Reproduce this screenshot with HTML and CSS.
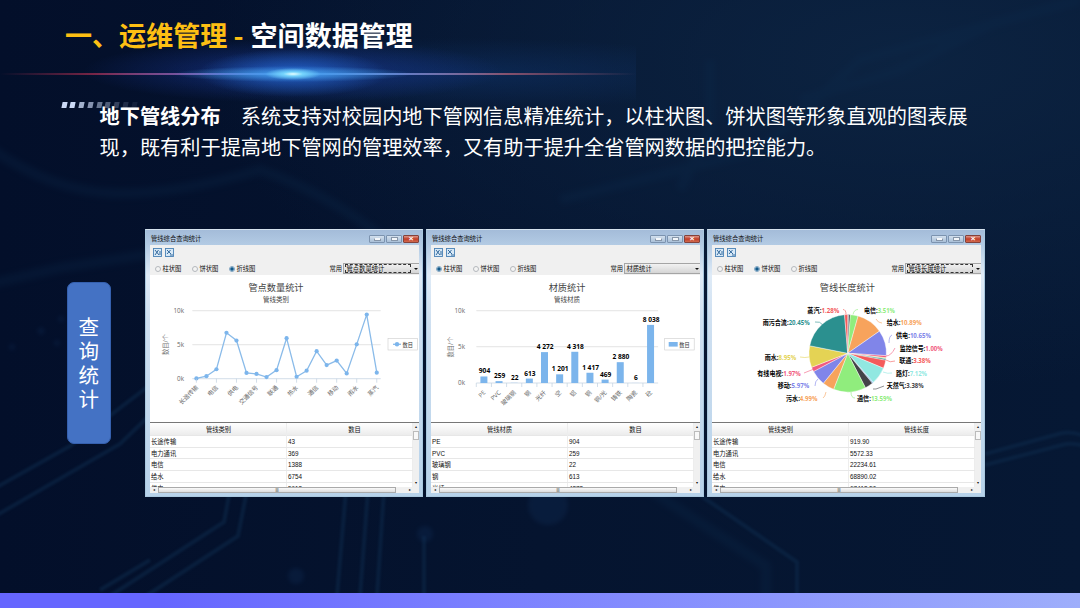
FILE: index.html
```html
<!DOCTYPE html>
<html lang="zh-CN">
<head>
    <meta charset="UTF-8">
    <meta name="viewport" content="width=device-width, initial-scale=1.0">
    <title>运维管理 - 空间数据管理</title>
    <link rel="stylesheet" href="styles.css">
</head>
<body>

<div class="slide">
    <!-- Circuit board background -->
    <svg class="circuit" viewBox="0 0 1080 608">
        <g class="wide">
            <path d="M-10 148 Q50 190 110 193 T260 170 Q320 190 380 235"/>
            <path d="M-10 284 L60 268 L150 254"/>
            <path d="M650 490 L766 566 V600"/>
            <path d="M560 200 L760 150 L860 60 L1080 0"/>
            <path d="M710 60 V130 L680 190"/>
            <path d="M800 100 L900 70 L1000 20"/>
        </g>
        <g class="thin">
            <path d="M-10 491 L70 446 L150 385"/>
            <path d="M-10 519 L120 444 L150 415"/>
            <path d="M230 490 L224 522 L110 596"/>
            <path d="M247 490 L238 536 L146 596"/>
            <path d="M346 490 L337 596"/>
            <path d="M368 490 L360 596"/>
            <path d="M384 490 L377 596"/>
            <path d="M424 536 V596"/>
            <path d="M700 495 L797 562 V596"/>
            <path d="M985 454 L1062 433 Q1072 431 1084 436"/>
            <path d="M985 465 L1062 445 Q1072 442 1084 446"/>
            <path d="M100 590 L150 560"/>
        </g>
        <g class="node">
            <circle cx="12" cy="347" r="3"/>
            <circle cx="41" cy="331" r="3.5"/>
            <circle cx="61" cy="319" r="3"/>
            <circle cx="57" cy="343" r="3"/>
            <circle cx="425" cy="534" r="8"/>
            <circle cx="296" cy="576" r="8"/>
            <circle cx="548" cy="505" r="20"/>
        </g>
    </svg>

    <header>
        <h1><span>一、运维管理 -</span> 空间数据管理</h1>
        <div class="flare"></div>
    </header>

    <section class="intro">
        <div class="stripes">
            <i></i><i></i><i></i><i></i><i></i><i></i><i></i><i></i><i></i>
        </div>
        <p><b>地下管线分布</b>　系统支持对校园内地下管网信息精准统计，以柱状图、饼状图等形象直观的图表展<br>现，既有利于提高地下管网的管理效率，又有助于提升全省管网数据的把控能力。</p>
    </section>

    <main>
        <div class="side-label">查询统计</div>
        <div class="windows" id="windows"></div>
    </main>

    <footer></footer>
</div>

<script>
    const COLORS = ["#7cb5ec", "#434348", "#90ed7d", "#f7a35c", "#8085e9", "#f15c80", "#e4d354", "#2b908f", "#f45b5b", "#91e8e1"];

    const windowsData = [
        {
            type: 2, select: "管点数量统计", focus: true, chart: lineChart,
            head: ["管线类别", "数目"],
            rows: [["长途传输", "43"], ["电力通讯", "369"], ["电信", "1388"], ["给水", "6754"], ["供电", "5613"]]
        },
        {
            type: 0, select: "材质统计", focus: false, chart: barChart,
            head: ["管线材质", "数目"],
            rows: [["PE", "904"], ["PVC", "259"], ["玻璃钢", "22"], ["钢", "613"], ["光纤", "4272"]]
        },
        {
            type: 1, select: "管线长度统计", focus: true, chart: pieChart,
            head: ["管线类别", "管线长度"],
            rows: [["长途传输", "919.90"], ["电力通讯", "5572.33"], ["电信", "22234.61"], ["给水", "68890.02"], ["供电", "67413.50"]]
        }
    ];

    function text(x, y, cls, str, extra) {
        return `<text x="${x}" y="${y}" class="${cls}" ${extra || ""}>${str}</text>`;
    }

    function grid(x1, x2, ys) {
        let out = "";
        ys.forEach((y, i) => {
            out += `<path class="${i === 2 ? "axis" : "grid"}" d="M${x1} ${y}H${x2}"/>`;
            out += text(34, y + 2, "tick", ["10k", "5k", "0k"][i]);
        });
        return out;
    }

    function legend(x, mark) {
        return `<rect class="legend" x="${x}" y="63.5" width="29.5" height="11.5"/>` + mark + text(x + 14.5, 71.5, "legend-text", "数目");
    }

    function lineChart() {
        const values = [40, 369, 1388, 6754, 5613, 850, 700, 240, 1260, 5960, 290, 1180, 4050, 2000, 2660, 780, 5050, 9430, 880];
        const names = ["长途传输", "电信", "供电", "交通信号", "联通", "热水", "通信", "移动", "雨水", "蒸汽"];
        const px = i => 46.4 + i * 10.02;
        const py = v => 103.7 - v * 0.0068;
        let out = text(126, 16, "title", "管点数量统计") + text(126, 27.4, "subtitle", "管线类别");
        out += grid(42.3, 230.7, [35.7, 69.7, 103.7]);
        out += text(0, 0, "y-title", "数目/个", 'transform="translate(18 69.5) rotate(-90)"');
        out += `<polyline class="line" points="${values.map((v, i) => px(i).toFixed(1) + "," + py(v).toFixed(1)).join(" ")}"/>`;
        values.forEach((v, i) => out += `<circle class="dot" cx="${px(i)}" cy="${py(v)}" r="2.1"/>`);
        names.forEach((n, i) => {
            out += `<path class="axis" d="M${px(i * 2)} 103.7v4"/>`;
            out += text(0, 0, "x-label", n, `transform="translate(${px(i * 2) + 2} 113) rotate(-45)"`);
        });
        return out + legend(238, '<path class="line" d="M243 69.3h8"/><circle class="dot" cx="247" cy="69.3" r="2.2"/>');
    }

    function barChart() {
        const data = [["PE", 904], ["PVC", 259], ["玻璃钢", 22], ["钢", 613], ["光纤", 4272], ["空", 1201], ["铝", 4318], ["铜", 1417], ["铜/光", 469], ["铸铁", 2880], ["陶瓷", 6], ["砼", 8038]];
        let out = text(136, 16, "title", "材质统计") + text(136, 27.4, "subtitle", "管线材质");
        out += grid(45.3, 227.1, [35.7, 71.7, 108]);
        out += text(0, 0, "y-title", "数目/个", 'transform="translate(22 72) rotate(-90)"');
        data.forEach(([name, v], i) => {
            const cx = 52.9 + i * 15.15;
            const h = v * 0.00723;
            out += `<path class="axis" d="M${cx - 7.6} 108v4"/>`;
            out += `<rect class="bar" x="${cx - 3.5}" y="${108 - h}" width="7" height="${h}"/>`;
            out += text(cx + 0.6, 105 - h, "bar-label", String(v).replace(/(\d)(\d{3})$/, "$1 $2"));
            out += text(0, 0, "x-label", name, `transform="translate(${cx + 2} 118) rotate(-45)"`);
        });
        return out + legend(233.7, '<rect class="bar" x="237.7" y="67" width="9" height="4.6"/>');
    }

    function pieChart() {
        const slices = [[0.35, 7], [0.75, 1], [3.2, 2], [10.9, 3], [10.6, 4], [0.9, 5], [0.4, 6], [0.6, 7], [3.38, 8], [7.2, 9], [0.5, 0], [3.38, 1], [13.4, 2], [4.9, 3], [6.3, 4], [1.9, 5], [8.95, 6], [20.45, 7], [1.28, 8]];
        // name, percent, colour, x, y, width
        const labels = [
            ["蒸汽", "1.28%", 8, 95.3, 35.3, 32], ["电信", "3.51%", 2, 152, 35.3, 31],
            ["给水", "10.89%", 3, 174.7, 48, 35], ["供电", "10.65%", 4, 184, 60.7, 35],
            ["监控信号", "1.00%", 5, 187.7, 73.3, 43], ["联通", "3.38%", 8, 187.3, 85.7, 31.5],
            ["路灯", "7.12%", 9, 184, 98.3, 31], ["天然气", "3.38%", 1, 174.7, 111, 37],
            ["通信", "13.59%", 2, 145, 123.5, 35], ["污水", "4.99%", 3, 74, 123.5, 31.5],
            ["移动", "5.97%", 4, 65.7, 111, 31.5], ["有线电视", "1.97%", 5, 45.3, 98.3, 43.5],
            ["雨水", "8.95%", 6, 52.7, 83, 31.5], ["雨污合流", "20.45%", 7, 50.7, 48, 47]
        ];
        const links = [
            ["M131 34.5q3 0 3 5", 8], ["M146 34.5q-4 0-5 5", 2], ["M170 48q-4 0-6-4", 3], ["M180 60q-3 1-3 8", 4],
            ["M183 73q-4 8-9 8", 5], ["M183 86q-5 2-9-1", 8], ["M180 98q-4 1-9-1", 9], ["M172 111l-8 3h-3", 1],
            ["M143 123q-4 0-4-6", 2], ["M111 123q2-1 3-6", 3], ["M103 111q0-5 3-7", 4], ["M92 98l10-4", 5],
            ["M88 82q5 1 9 0", 6], ["M103 47q5-1 8 3", 7]
        ];
        const total = slices.reduce((s, d) => s + d[0], 0);
        const cx = 135.7, cy = 78.3, r = 38.7;
        let a = 0;
        let out = text(135.3, 16, "title", "管线长度统计");
        slices.forEach(([v, c]) => {
            const b = a + v / total * Math.PI * 2;
            out += `<path class="slice" fill="${COLORS[c]}" d="M${cx} ${cy}L${cx + r * Math.sin(a)} ${cy - r * Math.cos(a)}A${r} ${r} 0 0 1 ${cx + r * Math.sin(b)} ${cy - r * Math.cos(b)}Z"/>`;
            a = b;
        });
        links.forEach(([d, c]) => out += `<path class="link" stroke="${COLORS[c]}" d="${d}"/>`);
        labels.forEach(([n, p, c, x, y, w]) => {
            out += text(x, y + 2.3, "pie-label", `${n}:<tspan fill="${COLORS[c]}">${p}</tspan>`, `textLength="${w}" lengthAdjust="spacingAndGlyphs"`);
        });
        return out;
    }

    document.getElementById("windows").innerHTML = windowsData.map(w => `
        <div class="window">
            <div class="title-bar">
                <span>管线综合查询统计</span>
                <div class="buttons"><i class="min"></i><i class="max"></i><i class="close">×</i></div>
            </div>
            <div class="client">
                <div class="toolbar">
                    <svg viewBox="0 0 9 9"><rect x=".5" y=".5" width="8" height="8"/><path d="M2 2l4 5M5.5 2L2 7M6 4h2M6 6h2"/></svg>
                    <svg viewBox="0 0 9 9"><rect x=".5" y=".5" width="8" height="8"/><path d="M2 2l4 4M5.5 2L2 6M5 7h3"/></svg>
                </div>
                <div class="options">
                    ${["柱状图", "饼状图", "折线图"].map((t, i) => `<label class="${i === w.type ? "checked" : ""}">${t}</label>`).join("")}
                    <span class="common">常用</span>
                    <div class="select ${w.focus ? "focus" : ""}"><span>${w.select}</span></div>
                </div>
                <svg class="chart" viewBox="0 0 271 147">${w.chart()}</svg>
                <div class="table">
                    <div class="cells">
                        <div class="row head"><span>${w.head[0]}</span><span>${w.head[1]}</span></div>
                        ${w.rows.map(r => `<div class="row"><span>${r[0]}</span><span>${r[1]}</span></div>`).join("")}
                    </div>
                    <div class="v-scroll"><b>▴</b><i></i><b>▾</b></div>
                </div>
                <div class="h-scroll"><b>◂</b><i>|||</i><b>▸</b></div>
            </div>
        </div>`).join("");
</script>

</body>
</html>
```
FILE: styles.css
```css
*, *::before, *::after {
    box-sizing: border-box;
}
body {
    margin: 0;
    font-family: "Liberation Sans", "Noto Sans CJK SC", sans-serif;
}
.slide {
    position: relative;
    display: flex;
    flex-direction: column;
    width: 1080px;
    height: 608px;
    overflow: hidden;
    color: #fff;
    background: radial-gradient(ellipse 700px 330px at 900px 60px, #0c2341, transparent), linear-gradient(90deg, #030f2a, #05142f 50%, #061834);
}
.circuit {
    position: absolute;
    inset: 0;
    fill: none;
}
.circuit .wide {
    stroke: #0d2b4c;
    stroke-width: 10;
    opacity: 0.28;
    filter: blur(3px);
}
.circuit .thin {
    stroke: #0d2a4b;
    stroke-width: 4;
    opacity: 0.55;
    filter: blur(1px);
}
.circuit .node {
    fill: #12305a;
    opacity: 0.3;
    filter: blur(2px);
}

header {
    position: relative;
    height: 101px;
}
h1 {
    margin: 0;
    padding: 15px 0 0 65px;
    font: bold 27.05px/40px "Noto Sans CJK SC", sans-serif;
    white-space: nowrap;
    position: relative;
    z-index: 1;
}
h1 span {
    color: #fdbf13;
    margin-right: 1px;
}
.flare {
    position: absolute;
    left: 0;
    top: 34px;
    width: 636px;
    height: 80px;
    background:
        radial-gradient(ellipse 28px 6px at 293px 40px, #e8ffff 0%, rgba(125, 222, 255, 0.85) 35%, rgba(80, 180, 255, 0) 100%),
        radial-gradient(ellipse 120px 8px at 293px 40px, rgba(75, 168, 245, 0.9), rgba(75, 168, 245, 0)),
        radial-gradient(ellipse 95px 24px at 293px 39px, rgba(38, 110, 220, 0.75), rgba(38, 110, 220, 0)),
        radial-gradient(ellipse 210px 32px at 293px 37px, rgba(28, 60, 165, 0.6), rgba(28, 60, 165, 0)),
        linear-gradient(90deg, transparent, #7b2545 15%, #a678c9 35%, #c9e6ff 46%, #8299d8 62%, #85506c 80%, transparent) 0 39px / 100% 2px no-repeat,
        radial-gradient(ellipse 300px 36px at 460px 40px, rgba(18, 60, 125, 0.4), rgba(18, 60, 125, 0));
}

.intro {
    position: relative;
    height: 128px;
    padding-left: 100px;
}
.intro p {
    margin: 0;
    font: 20.19px/31px "Noto Sans CJK SC", sans-serif;
    white-space: nowrap;
    position: relative;
    top: -1px;
    left: -0.5px;
}
.stripes {
    position: absolute;
    left: 61.5px;
    top: 1px;
    display: flex;
    gap: 3.4px;
}
.stripes i {
    width: 5.4px;
    height: 6px;
    background: #cbd9f6;
    transform: skewX(-12deg);
}
.stripes i:nth-child(3) { opacity: 0.8; }
.stripes i:nth-child(4) { opacity: 0.65; }
.stripes i:nth-child(5) { opacity: 0.5; }
.stripes i:nth-child(6) { opacity: 0.38; }
.stripes i:nth-child(7) { opacity: 0.25; }
.stripes i:nth-child(8) { opacity: 0.15; }
.stripes i:nth-child(9) { opacity: 0.08; }

main {
    position: relative;
    flex: 1;
    display: flex;
    align-items: flex-start;
    padding-left: 67px;
}
.side-label {
    width: 44px;
    height: 162px;
    margin: 53px 34px 0 0;
    padding: 31px 10.5px 0;
    border: 1px solid #3560ae;
    border-radius: 7px;
    background: #4472c4;
    font: 20.5px/24.1px "Noto Sans CJK SC", sans-serif;
    word-break: break-all;
}
.windows {
    display: flex;
}
.window {
    width: 278px;
    height: 268px;
    margin-right: 3px;
    padding: 0 3px 3px 4px;
    border: 1px solid #a9c8df;
    border-top-color: #d5e2ee;
    background: linear-gradient(#a4bcd9, #b3cbe4 15px, #dfebf7 45px, #cfe0f1 90px, #b7d2ea);
    color: #111;
    font-size: 6.3px;
    display: flex;
    flex-direction: column;
}
.title-bar {
    height: 15px;
    display: flex;
    justify-content: space-between;
    padding-left: 1px;
    line-height: 18px;
}
.buttons {
    display: flex;
    gap: 1px;
    padding-top: 5px;
}
.buttons i {
    width: 16px;
    height: 8px;
    border: 1px solid #7c93af;
    border-radius: 1px;
    background: linear-gradient(#d3e0ee, #a9bfd7);
    font: bold 8px/6px "Liberation Sans", sans-serif;
    text-align: center;
    color: #fff;
}
.buttons .min::before, .buttons .max::before {
    content: "";
    display: block;
    width: 7px;
    height: 3px;
    margin: 2px auto 0;
    background: #f4f7fa;
    border: 1px solid #8796a9;
    border-top-color: #f4f7fa;
}
.buttons .max::before {
    height: 4px;
    margin-top: 1px;
    border-top-color: #8796a9;
}
.buttons .close {
    background: linear-gradient(#dc998c, #c23c28 50%, #cf6a4e);
    border-color: #84423b;
}
.client {
    flex: 1;
    display: flex;
    flex-direction: column;
    overflow: hidden;
    background: #f0f0f0;
}
.toolbar {
    display: flex;
    gap: 3px;
    height: 17px;
    padding: 3px 0 0 2.5px;
}
.toolbar svg {
    width: 9px;
    height: 9px;
    fill: #d8e9f7;
    stroke: #4b82b5;
    stroke-width: 0.9;
}
.toolbar path {
    stroke: #235b92;
    fill: none;
}
.options {
    display: flex;
    align-items: center;
    height: 13px;
}
.options label {
    display: flex;
    align-items: center;
    gap: 2px;
    width: 37px;
    white-space: nowrap;
}
.options label:first-child {
    margin-left: 4.5px;
}
.options label::before {
    content: "";
    flex: none;
    width: 6px;
    height: 6px;
    border: 1px solid #b4b8bd;
    border-radius: 50%;
    background: #f4f4f4;
}
.options .checked::before {
    border-color: #7fa3c0;
    background: radial-gradient(#135888 45%, #a8cee6 75%);
}
.common {
    margin-left: auto;
    margin-right: 1px;
}
.select {
    display: flex;
    align-items: center;
    width: 76px;
    height: 11px;
    padding-left: 1px;
    border: 1px solid #a5a5a5;
    border-right: 0;
    background: linear-gradient(#f2f2f2, #d5d5d5);
}
.select::after {
    content: "";
    margin: 0 1px 0 auto;
    border: 2px solid transparent;
    border-top: 2.5px solid #111;
    border-bottom: 0;
}
.select span {
    width: 66px;
    height: 9px;
    line-height: 9px;
    padding-left: 0.5px;
}
.select.focus span {
    border: 1px dashed #333;
    line-height: 8px;
}

/* Charts */
.chart {
    width: 271px;
    height: 147px;
    background: #fff;
    flex: none;
}
.chart text {
    font-family: "Open Sans", "Noto Sans CJK SC", sans-serif;
}
.title {
    font-size: 9.2px;
    fill: #444;
    text-anchor: middle;
}
.subtitle {
    font-size: 6.5px;
    fill: #444;
    text-anchor: middle;
}
.tick {
    font-size: 6.3px;
    fill: #666;
    text-anchor: end;
}
.y-title {
    font-size: 6.3px;
    fill: #707070;
    text-anchor: middle;
}
.x-label {
    font-size: 6px;
    fill: #666;
    text-anchor: end;
}
.grid {
    stroke: #d8d8d8;
    stroke-width: 0.7;
}
.axis {
    stroke: #c0d0e0;
    stroke-width: 0.7;
}
.line {
    fill: none;
    stroke: #8abbe9;
    stroke-width: 1.3;
}
.dot, .bar {
    fill: #7cb5ec;
}
.bar-label {
    font-size: 6.6px;
    font-weight: bold;
    text-anchor: middle;
}
.legend {
    fill: #fff;
    stroke: #ccc;
    stroke-width: 0.6;
}
.legend-text {
    font-size: 5.2px;
    fill: #333;
}
.slice {
    stroke: #fff;
    stroke-width: 0.4;
}
.link {
    fill: none;
    stroke-width: 0.6;
}
.pie-label {
    font-size: 6.3px;
    font-weight: bold;
}

/* Data table */
.table {
    flex: 1;
    display: flex;
    overflow: hidden;
    border-top: 1px solid #777;
    background: #fff;
}
.cells {
    flex: 1;
}
.row {
    display: grid;
    grid-template-columns: 137px 1fr;
    height: 11.6px;
    line-height: 11px;
    border-bottom: 1px solid #e7e7e7;
}
.row span {
    padding-left: 1px;
    border-right: 1px solid #ededed;
}
.row.head {
    height: 13.2px;
    line-height: 13px;
    text-align: center;
    background: linear-gradient(#fff, #ececec);
}
.row.head span:last-child {
    padding-left: 10px;
}
.v-scroll {
    width: 6px;
    display: flex;
    flex-direction: column;
    justify-content: space-between;
    background: #f0f0f0;
    font-size: 4px;
    line-height: 8px;
    text-align: center;
}
.v-scroll i {
    height: 9px;
    margin-bottom: auto;
    border: 1px solid #bbb;
    background: #f8f8f8;
}
.v-scroll b, .h-scroll b {
    font-weight: normal;
}
.h-scroll {
    display: flex;
    height: 6px;
    font-size: 4px;
    line-height: 5px;
    padding: 0 8px 0 3px;
    background: #f0f0f0;
}
.h-scroll i {
    flex: 1;
    margin: 0 13px 0 3px;
    border: 1px solid #aaa;
    background: linear-gradient(#fafafa, #dcdcdc);
    font-style: normal;
    line-height: 4px;
    text-align: center;
}

footer {
    position: relative;
    height: 15px;
    background: linear-gradient(90deg, #6666ff 15%, #7b80ff 45%, #9eaefb);
}
```
